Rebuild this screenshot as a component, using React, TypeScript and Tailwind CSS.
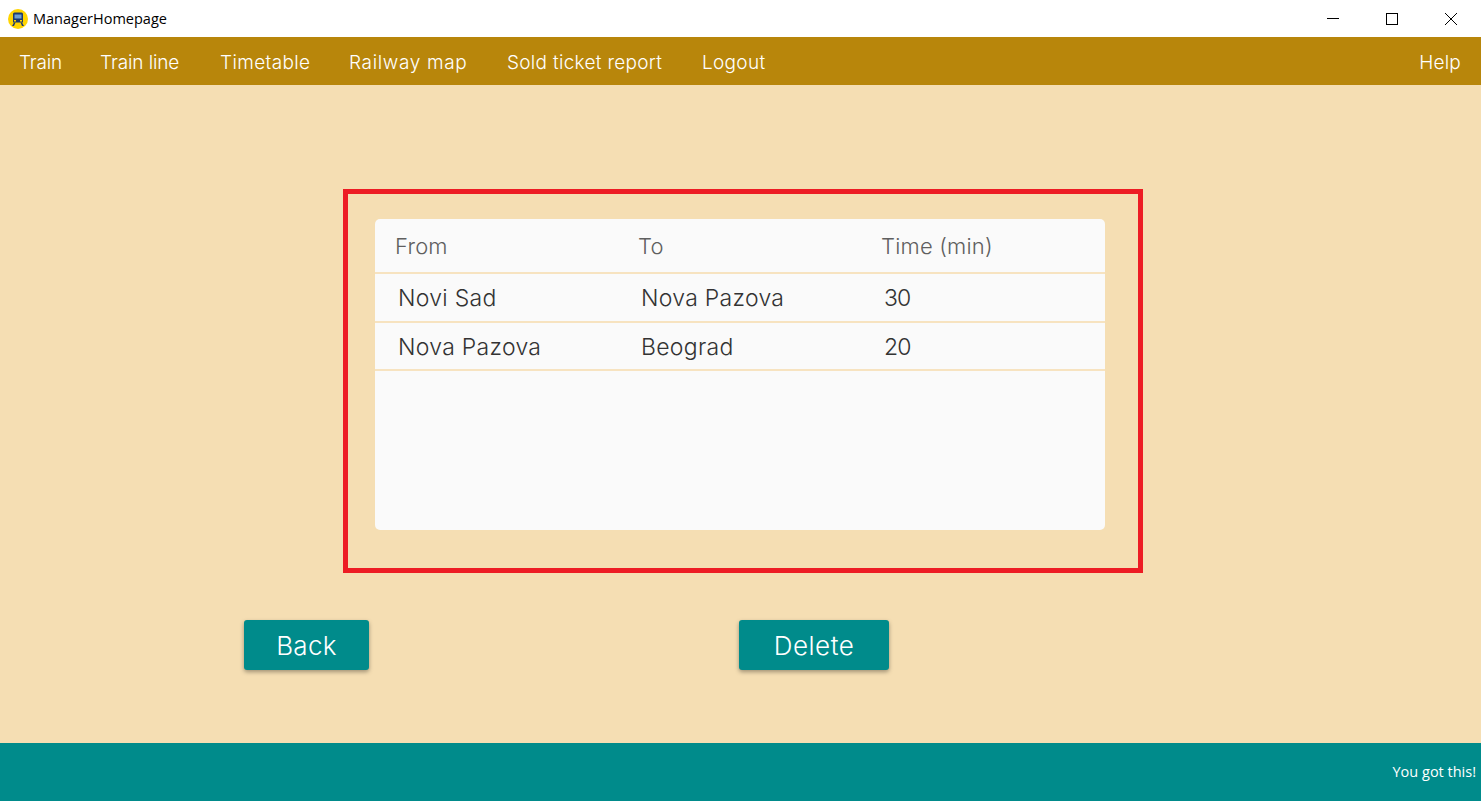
const menuItems = [
  { label: 'Train', cls: 'w-[41px] tracking-[-0.2px]' },
  { label: 'Train line', cls: 'w-[80px] tracking-[-0.1px]' },
  { label: 'Timetable', cls: 'w-[89px] tracking-[0.35px]' },
  { label: 'Railway map', cls: 'w-[118px] tracking-[0.65px]' },
  { label: 'Sold ticket report', cls: 'w-[155px] tracking-[0.3px]' },
  { label: 'Logout', cls: 'w-[64px] tracking-[0.3px]' },
];

const stops = [
  { from: 'Novi Sad', to: 'Nova Pazova', time: '30' },
  { from: 'Nova Pazova', to: 'Beograd', time: '20' },
];

function TrainIcon() {
  return (
    <svg width="20" height="20" viewBox="0 0 20 20">
      <circle cx="10" cy="10" r="10" fill="#ffd400" />
      <path d="M6.500 3.500h7a1.500 1.500 0 0 1 1.500 1.500v8.500H5V5a1.500 1.500 0 0 1 1.500-1.500z" fill="#1d3a6e" />
      <rect x="6.500" y="5.500" width="7" height="4" fill="#6f9fd0" />
      <rect x="6" y="11" width="2" height="1.500" fill="#ffd400" />
      <rect x="12" y="11" width="2" height="1.500" fill="#ffd400" />
      <path d="M6 13.500l-2 3.500h2l1.500-3.500zM14 13.500l2 3.500h-2l-1.500-3.500z" fill="#1d3a6e" />
    </svg>
  );
}

function WindowButtons() {
  return (
    <div className="flex">
      <div className="w-[59px] h-[37px] flex items-center justify-center">
        <svg width="12" height="12" viewBox="0 0 12 12"><path d="M0 5.500h12" stroke="#000" strokeWidth="1" /></svg>
      </div>
      <div className="w-[59px] h-[37px] flex items-center justify-center">
        <svg width="12" height="12" viewBox="0 0 12 12"><rect x="0.500" y="0.500" width="11" height="11" fill="none" stroke="#000" strokeWidth="1" /></svg>
      </div>
      <div className="w-[59px] h-[37px] flex items-center justify-center">
        <svg width="12" height="12" viewBox="0 0 12 12"><path d="M0 0l12 12M12 0L0 12" stroke="#000" strokeWidth="1" /></svg>
      </div>
    </div>
  );
}

export default function App() {
  return (
    <div className="w-[1481px] h-[801px] flex flex-col overflow-hidden bg-[#f5deb3] font-['Inter',sans-serif]">
      {/* title bar */}
      <div className="h-[37px] bg-white flex items-center justify-between pl-[8px] pr-[1px]">
        <div className="flex items-center gap-[5px]">
          <TrainIcon />
          <span className="text-[14.5px] text-black font-['Open_Sans',sans-serif]">ManagerHomepage</span>
        </div>
        <WindowButtons />
      </div>

      {/* menu */}
      <div className="h-[48px] bg-[#b8860b] flex items-center justify-between pt-[4px] pl-[19px] pr-[20px] text-white text-[19px] font-light">
        <div className="flex gap-[40px]">
          {menuItems.map((item) => (
            <span key={item.label} className={`whitespace-nowrap ${item.cls}`}>{item.label}</span>
          ))}
        </div>
        <span className="tracking-[0.2px]">Help</span>
      </div>

      {/* content */}
      <div className="flex-1 flex flex-col pt-[104px] pl-[244px]">
        <div className="ml-[99px] w-[800px] h-[384px] border-[5px] border-[#ed1c24] pt-[25px] pl-[27px]">
          <div className="w-[730px] h-[311px] bg-[#fafafa] rounded-[5px] flex flex-col">
            <div className="h-[55px] flex items-center pt-[2px] pl-[20px] text-[22px] tracking-[0.2px] font-light text-[#5f5f5f] border-b-2 border-[#f7e3c0]">
              <span className="w-[243px]">From</span>
              <span className="w-[243px]">To</span>
              <span>Time (min)</span>
            </div>
            {stops.map((s) => (
              <div key={s.from} className="h-[48.5px] flex items-center pt-[2px] pl-[23px] text-[23px] tracking-[0.3px] text-[#333] font-light border-b-2 border-[#f7e3c0]">
                <span className="w-[243px]">{s.from}</span>
                <span className="w-[243px]">{s.to}</span>
                <span className="tracking-[-0.9px]">{s.time}</span>
              </div>
            ))}
          </div>
        </div>

        <div className="flex mt-[47px]">
          <button className="w-[125px] h-[50px] pt-[1px] bg-[#008b8b] rounded-[3px] text-white text-[26px] tracking-[0.3px] font-light shadow-[0_2px_4px_rgba(0,0,0,0.35)]">Back</button>
          <button className="ml-[370px] w-[150px] h-[50px] pt-[1px] bg-[#008b8b] rounded-[3px] text-white text-[26px] tracking-[0.5px] font-light shadow-[0_2px_4px_rgba(0,0,0,0.35)]">Delete</button>
        </div>
      </div>

      {/* footer */}
      <div className="h-[58px] bg-[#008b8b] flex items-center justify-end pr-[5px] text-white text-[14.5px] font-['Open_Sans',sans-serif]">
        You got this!
      </div>
    </div>
  );
}
